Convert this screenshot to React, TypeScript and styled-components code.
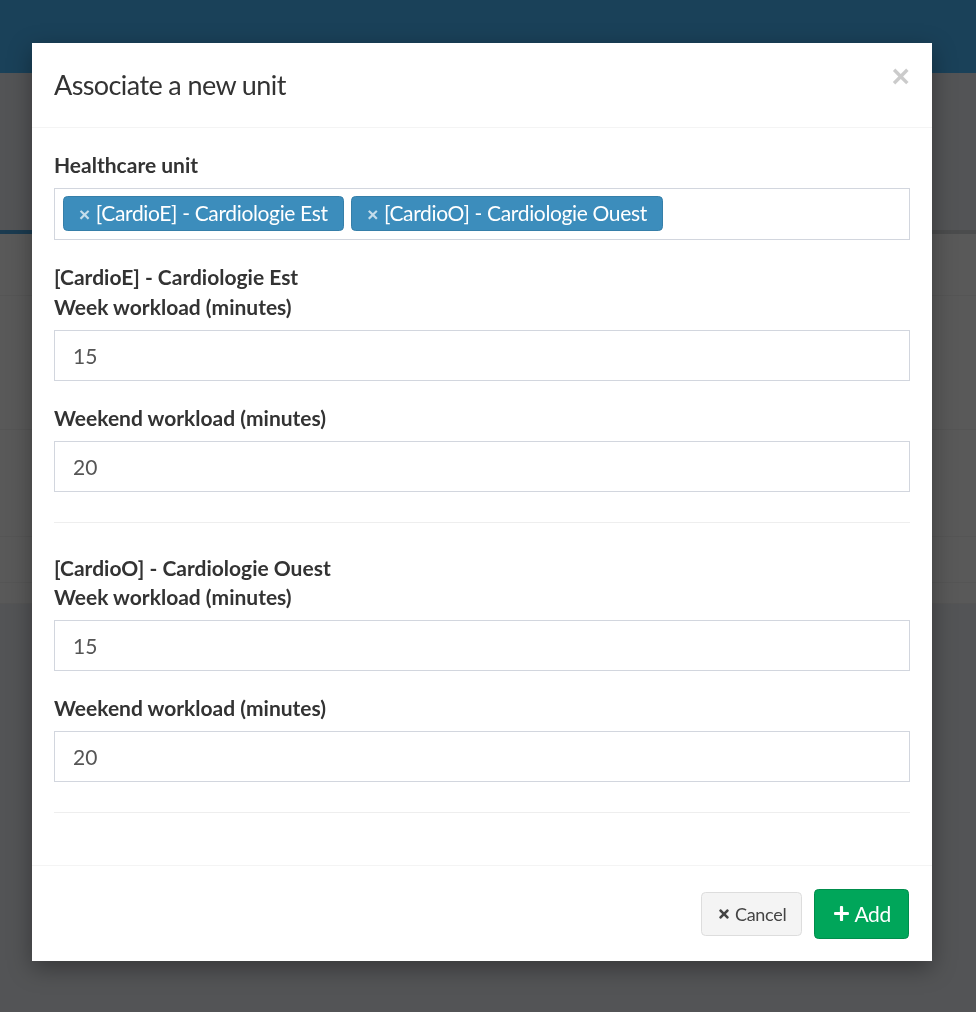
import React from "react";
import styled, { createGlobalStyle } from "styled-components";
import { FaTimes, FaPlus } from "react-icons/fa";

const GlobalStyle = createGlobalStyle`
  html, body {
    margin: 0;
    padding: 0;
    background: #535456;
  }
  body {
    font-family: Lato, "Noto Sans", "Liberation Sans", sans-serif;
    font-size: 21px;
    line-height: 1.42857;
    color: #333;
  }
  * {
    box-sizing: border-box;
  }
`;

/* page behind the backdrop (colours already dimmed) */

const Page = styled.div`
  min-height: 1012px;
  background: #535456;
`;

const TopBar = styled.div`
  height: 73px;
  background: #1a4159;
`;

const Content = styled.div`
  padding-top: 157px;
`;

const Box = styled.div`
  background: #595959;
`;

const TabStrip = styled.div`
  display: flex;
  height: 4px;
`;

const TabEdge = styled.div<{ $active?: boolean }>`
  flex: ${(p) => (p.$active ? "0 0 480px" : "1")};
  background: ${(p) => (p.$active ? "#1b3b50" : "#4b4c4d")};
`;

const BoxRow = styled.div<{ $h: number }>`
  height: ${(p) => p.$h}px;
  border-bottom: 1px solid #555555;
`;

/* modal */

const Backdrop = styled.div`
  position: fixed;
  inset: 0;
  display: flex;
  justify-content: flex-start;
  align-items: flex-start;
`;

const Modal = styled.div`
  width: 900px;
  margin: 43px 0 0 32px;
  background: #fff;
  box-shadow: 0 7px 22px rgba(0, 0, 0, 0.35);
`;

const ModalHeader = styled.div`
  display: flex;
  justify-content: space-between;
  align-items: flex-start;
  padding: 23px 22px 22px;
  border-bottom: 1px solid #f4f4f4;
`;

const Title = styled.h4`
  margin: 0;
  font-size: 27px;
  font-weight: 400;
  line-height: 1.42857;
  letter-spacing: -0.6px;
  color: #333;
`;

const Close = styled.button`
  border: 0;
  background: transparent;
  padding: 0;
  margin-top: -5px;
  font-family: "Liberation Sans", Arial, sans-serif;
  font-size: 31.5px;
  font-weight: 700;
  line-height: 1;
  color: #000;
  opacity: 0.2;
  text-shadow: 0 1px 0 #fff;
  cursor: pointer;
`;

const ModalBody = styled.div`
  padding: 22.5px 22px;
`;

const FormGroup = styled.div`
  margin-bottom: 22.5px;
`;

const Label = styled.label`
  display: inline-block;
  max-width: 100%;
  margin-bottom: 7.5px;
  font-weight: 700;
`;

const SectionTitle = styled.div`
  font-weight: 700;
`;

const SelectBox = styled.div`
  display: flex;
  flex-wrap: wrap;
  align-items: flex-start;
  gap: 7.5px;
  min-height: 52px;
  padding: 7px 8px 0;
  border: 1px solid #d2d6de;
  background: #fff;
`;

const Tag = styled.span`
  display: inline-flex;
  align-items: center;
  height: 35px;
  padding: 0 15px;
  background: #3c8dbc;
  border: 1px solid #367fa9;
  border-radius: 4.5px;
  color: #fff;
  letter-spacing: -0.35px;
`;

const TagRemove = styled.span`
  display: inline-block;
  margin: 2px 6px 0 0;
  font-family: "Liberation Sans", Arial, sans-serif;
  font-size: 19px;
  font-weight: 700;
  line-height: 1;
  color: rgba(255, 255, 255, 0.7);
`;

const Input = styled.input`
  display: block;
  width: 100%;
  height: 51px;
  padding: 9px 18px;
  font: inherit;
  font-size: 21px;
  color: #555;
  background: #fff;
  border: 1px solid #d2d6de;
  border-radius: 0;
  outline: none;
`;

const Divider = styled.hr`
  margin: 30px 0;
  border: 0;
  border-top: 1px solid #eee;
`;

const ModalFooter = styled.div`
  display: flex;
  justify-content: flex-end;
  align-items: center;
  gap: 12px;
  padding: 22.5px 23px 22.5px 22px;
  border-top: 1px solid #f4f4f4;
`;

const Button = styled.button<{ $variant: "default" | "success" }>`
  display: inline-flex;
  align-items: center;
  gap: 4px;
  height: ${(p) => (p.$variant === "success" ? "50px" : "44px")};
  padding: ${(p) => (p.$variant === "success" ? "0 17px 0 18px" : "0 15px")};
  font-family: inherit;
  font-size: ${(p) => (p.$variant === "success" ? "21px" : "18px")};
  letter-spacing: -0.3px;
  border-radius: 4.5px;
  cursor: pointer;
  color: ${(p) => (p.$variant === "success" ? "#fff" : "#444")};
  background: ${(p) => (p.$variant === "success" ? "#00a65a" : "#f4f4f4")};
  border: 1px solid ${(p) => (p.$variant === "success" ? "#008d4c" : "#ddd")};
`;

interface Unit {
  code: string;
  name: string;
  week: number;
  weekend: number;
}

const units: Unit[] = [
  { code: "CardioE", name: "Cardiologie Est", week: 15, weekend: 20 },
  { code: "CardioO", name: "Cardiologie Ouest", week: 15, weekend: 20 },
];

const label = (u: Unit) => `[${u.code}] - ${u.name}`;

const App: React.FC = () => {
  return (
    <>
      <GlobalStyle />
      <Page>
        <TopBar />
        <Content>
          <Box>
            <TabStrip>
              <TabEdge $active />
              <TabEdge />
            </TabStrip>
            <BoxRow $h={62} />
            <BoxRow $h={134} />
            <BoxRow $h={107} />
            <BoxRow $h={46} />
            <BoxRow $h={21} />
          </Box>
        </Content>
      </Page>

      <Backdrop>
        <Modal>
          <ModalHeader>
            <Title>Associate a new unit</Title>
            <Close aria-label="Close">×</Close>
          </ModalHeader>

          <ModalBody>
            <FormGroup>
              <Label>Healthcare unit</Label>
              <SelectBox>
                {units.map((u) => (
                  <Tag key={u.code}>
                    <TagRemove>×</TagRemove>
                    {label(u)}
                  </Tag>
                ))}
              </SelectBox>
            </FormGroup>

            {units.map((u) => (
              <React.Fragment key={u.code}>
                <SectionTitle>{label(u)}</SectionTitle>
                <FormGroup>
                  <Label>Week workload (minutes)</Label>
                  <Input type="text" defaultValue={u.week} />
                </FormGroup>
                <FormGroup>
                  <Label>Weekend workload (minutes)</Label>
                  <Input type="text" defaultValue={u.weekend} />
                </FormGroup>
                <Divider />
              </React.Fragment>
            ))}
          </ModalBody>

          <ModalFooter>
            <Button $variant="default">
              <FaTimes size={14} />
              Cancel
            </Button>
            <Button $variant="success">
              <FaPlus size={17} />
              Add
            </Button>
          </ModalFooter>
        </Modal>
      </Backdrop>
    </>
  );
};

export default App;
